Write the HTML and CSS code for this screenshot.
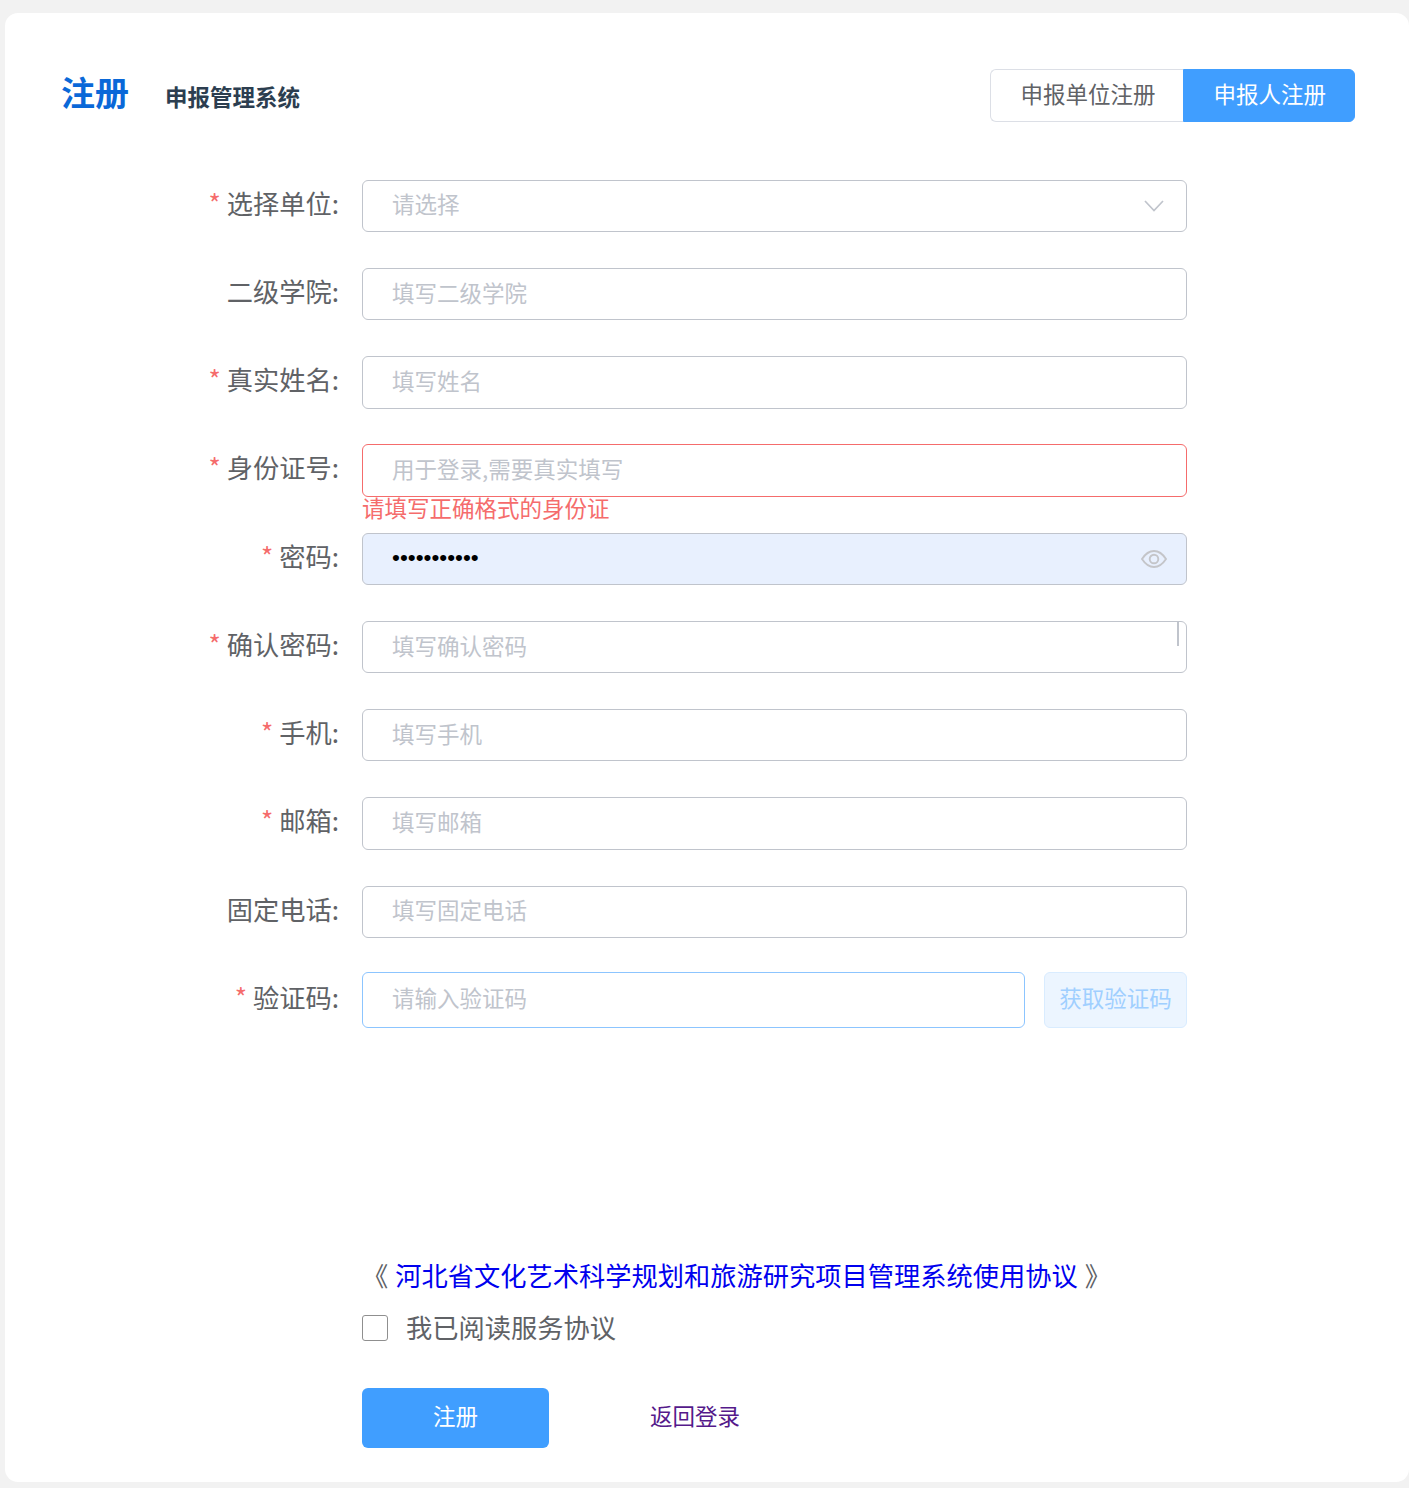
FILE: index.html
```html
<!DOCTYPE html>
<html lang="zh-CN">
<head>
<meta charset="utf-8">
<title>注册</title>
<link rel="stylesheet" href="styles.css">
</head>
<body>
<main class="card">
  <header class="head">
    <div class="titles">
      <h1 class="title">注册</h1>
      <span class="subtitle">申报管理系统</span>
    </div>
    <div class="tabs">
      <button class="tab" type="button">申报单位注册</button>
      <button class="tab tab-active" type="button">申报人注册</button>
    </div>
  </header>
  <form class="form">
    <div class="row">
      <label class="label req">选择单位:</label>
      <div class="field">
        <input class="input" placeholder="请选择" readonly>
        <svg class="suffix chevron" viewBox="0 0 20 12" width="20" height="12"><path d="M1 1 10 10.500 19 1" fill="none" stroke="#c0c4cc" stroke-width="1.700"/></svg>
      </div>
    </div>
    <div class="row">
      <label class="label">二级学院:</label>
      <div class="field"><input class="input" placeholder="填写二级学院"></div>
    </div>
    <div class="row">
      <label class="label req">真实姓名:</label>
      <div class="field"><input class="input" placeholder="填写姓名"></div>
    </div>
    <div class="row">
      <label class="label req">身份证号:</label>
      <div class="field">
        <input class="input input-error" placeholder="用于登录,需要真实填写">
        <div class="error">请填写正确格式的身份证</div>
      </div>
    </div>
    <div class="row">
      <label class="label req">密码:</label>
      <div class="field">
        <input class="input input-filled" type="password" value="12345678901">
        <svg class="suffix eye" viewBox="0 0 26 18" width="26" height="18"><path d="M1 9C4.500 3.600 8.500 1 13 1s8.500 2.600 12 8c-3.500 5.400-7.500 8-12 8S4.500 14.400 1 9Z" fill="none" stroke="#c4c5c9" stroke-width="1.900"/><circle cx="13" cy="9" r="4.300" fill="none" stroke="#c4c5c9" stroke-width="1.900"/></svg>
      </div>
    </div>
    <div class="row">
      <label class="label req">确认密码:</label>
      <div class="field">
        <input class="input" placeholder="填写确认密码">
        <span class="caret"></span>
      </div>
    </div>
    <div class="row">
      <label class="label req">手机:</label>
      <div class="field"><input class="input" placeholder="填写手机"></div>
    </div>
    <div class="row">
      <label class="label req">邮箱:</label>
      <div class="field"><input class="input" placeholder="填写邮箱"></div>
    </div>
    <div class="row row-tight">
      <label class="label">固定电话:</label>
      <div class="field"><input class="input" placeholder="填写固定电话"></div>
    </div>
    <div class="row row-code">
      <label class="label label-code req">验证码:</label>
      <div class="field field-code">
        <input class="input input-code" placeholder="请输入验证码">
        <button class="code-btn" type="button">获取验证码</button>
      </div>
    </div>
    <div class="agreement">
      <span class="bracket">《</span><a class="agree-link" href="#">河北省文化艺术科学规划和旅游研究项目管理系统使用协议</a><span class="bracket">》</span>
    </div>
    <label class="check">
      <span class="box"></span>
      <span>我已阅读服务协议</span>
    </label>
    <div class="actions">
      <button class="submit" type="button">注册</button>
      <a class="back" href="#">返回登录</a>
    </div>
  </form>
</main>
</body>
</html>
```
FILE: styles.css
```css
* { box-sizing: border-box; }
html, body { margin: 0; padding: 0; }
body {
  background: #f2f2f2;
  font-family: "Noto Sans CJK SC", "Liberation Sans", sans-serif;
  color: #606266;
  height: 1488px;
  overflow: hidden;
}
.card {
  margin: 13px 0 0 5px;
  width: 1404px;
  height: 1469px;
  background: #fff;
  border-radius: 13px;
  padding: 56px 54px 0 57px;
}
.head {
  display: flex;
  justify-content: space-between;
  align-items: center;
  height: 53px;
}
.titles { display: flex; align-items: baseline; gap: 36px; padding-bottom: 8px; margin-left: -1px; }
.title {
  margin: 0;
  font-size: 34px;
  line-height: 50px;
  font-weight: 700;
  color: #0a68d8;
}
.subtitle {
  font-size: 22.5px;
  font-weight: 700;
  color: #2c3e50;
}
.tabs { display: flex; height: 53px; }
.tab {
  font: inherit;
  font-size: 22.5px;
  color: #606266;
  background: #fff;
  border: 1px solid #dcdfe6;
  border-right: 0;
  border-radius: 6px 0 0 6px;
  padding: 0 28px 6px 29px;
  height: 53px;
  margin: 0;
}
.tab-active {
  background: #409eff;
  border-color: #409eff;
  color: #fff;
  border-radius: 0 6px 6px 0;
  border-right: 1px solid #409eff;
}
.form { margin-top: 57.7px; padding-left: 300px; width: 1125px; }
.row {
  display: flex;
  height: 52.4px;
  margin-bottom: 35.85px;
  margin-left: -300px;
}
.row-tight { margin-bottom: 33.9px; }
.row-code { height: 56px; margin-bottom: 222px; }
.label {
  width: 277px;
  flex: none;
  text-align: right;
  font-size: 26.25px;
  line-height: 46px;
  color: #606266;
  margin-right: 23px;
  white-space: nowrap;
}
.label-code { line-height: 50px; }
.req::before {
  content: "*";
  color: #f56c6c;
  margin-right: 6px;
  font-size: 26.25px;
}
.field { position: relative; width: 825px; flex: none; }
.field-code { display: flex; justify-content: space-between; height: 56px; }
.input {
  display: block;
  width: 100%;
  height: 52.4px;
  border: 1px solid #c0c4cc;
  border-radius: 6px;
  padding: 0 29px 5px;
  font: inherit;
  font-size: 22.5px;
  color: #606266;
  background: #fff;
  outline: none;
}
.input::placeholder { color: #c0c4cc; opacity: 1; }
.input-error { border-color: #f56c6c; }
.input-filled {
  background: #e8f0fe;
  color: #000;
  font-family: "Liberation Sans", sans-serif;
  padding-bottom: 2px;
}
.input-code { width: 663px; height: 56px; border-color: #8cc5ff; }
.code-btn {
  width: 143px;
  height: 56px;
  font: inherit;
  font-size: 22.5px;
  color: #a0cfff;
  background: #ecf5ff;
  border: 1px solid #d9ecff;
  border-radius: 6px;
  padding: 0 0 5px;
}
.error {
  position: absolute;
  top: 100%;
  left: 0;
  margin-top: -3px;
  font-size: 22.5px;
  line-height: 26px;
  color: #f56c6c;
  white-space: nowrap;
}
.suffix { position: absolute; display: block; }
.chevron { right: 23.5px; top: 20px; }
.eye { right: 20px; top: 17px; }
.caret {
  position: absolute;
  right: 8px;
  top: 1px;
  width: 2px;
  height: 24px;
  background: #c0c4cc;
}
.agreement {
  font-size: 26.25px;
  line-height: 50px;
  height: 52px;
  white-space: nowrap;
  color: #606266;
}
.agree-link { color: #0000ee; text-decoration: none; margin: 0 7px; }
.check {
  display: flex;
  align-items: center;
  gap: 18px;
  height: 52px;
  font-size: 26.25px;
  color: #606266;
}
.check span:last-child { padding-bottom: 2px; }
.box {
  width: 26px;
  height: 26px;
  border: 1px solid #8f8f8f;
  border-radius: 3px;
  background: #fff;
}
.actions {
  display: flex;
  align-items: center;
  margin-top: 34px;
}
.submit {
  width: 187px;
  height: 60px;
  border: 0;
  border-radius: 6px;
  background: #409eff;
  color: #fff;
  font: inherit;
  font-size: 22.5px;
  padding: 0 0 5px;
}
.back {
  margin-left: 101px;
  padding-bottom: 5px;
  font-size: 22.5px;
  color: #551a8b;
  text-decoration: none;
}
```
